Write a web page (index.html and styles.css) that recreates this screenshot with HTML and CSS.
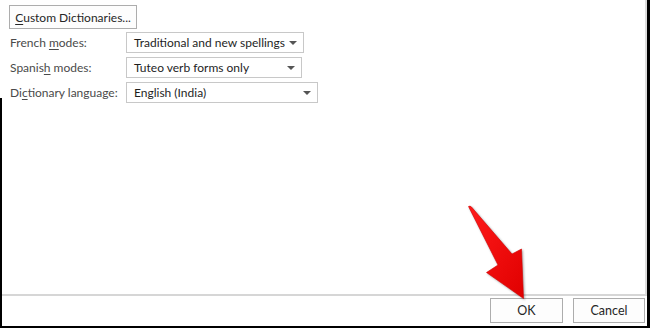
FILE: index.html
```html
<!DOCTYPE html>
<html lang="en">
<head>
<meta charset="utf-8">
<title>Custom Dictionaries</title>
<link rel="stylesheet" href="styles.css">
</head>
<body>
<div class="window">
  <div class="panel">
    <div class="form">
      <button class="btn btn-custom" type="button"><u>C</u>ustom Dictionaries...</button>
      <div class="rows">
        <div class="row">
          <span class="label">French <u>m</u>odes:</span>
          <div class="select select-fr"><span>Traditional and new spellings</span><i class="caret"></i></div>
        </div>
        <div class="row">
          <span class="label">Spanis<u>h</u> modes:</span>
          <div class="select select-es"><span>Tuteo verb forms only</span><i class="caret"></i></div>
        </div>
        <div class="row">
          <span class="label">Di<u>c</u>tionary language:</span>
          <div class="select select-lang"><span>English (India)</span><i class="caret"></i></div>
        </div>
      </div>
    </div>
  </div>
  <div class="footer">
    <button class="btn btn-foot" type="button">OK</button>
    <button class="btn btn-foot btn-cancel" type="button">Cancel</button>
  </div>
  <svg class="arrow" width="70" height="110" viewBox="460 200 70 110" aria-hidden="true">
    <defs>
      <linearGradient id="rg" x1="0" y1="0" x2="1" y2="1">
        <stop offset="0" stop-color="#ff1a1a"/>
        <stop offset="1" stop-color="#e00000"/>
      </linearGradient>
    </defs>
    <path d="M468.5,206.5 Q470,205.5 471.5,207 L512,254 L521.5,249 L523.5,298.5 L486.5,272.5 L498,265 Z" fill="url(#rg)" stroke="#d40000" stroke-width="0.6" stroke-linejoin="round"/>
  </svg>
</div>
</body>
</html>
```

FILE: styles.css
```css
* {
  box-sizing: border-box;
}

html, body {
  margin: 0;
  padding: 0;
  background: #fff;
}

body {
  font-family: Lato, "Open Sans", "Liberation Sans", sans-serif;
  font-size: 12px;
  color: #262626;
}

.window {
  position: relative;
  width: 650px;
  height: 328px;
  display: flex;
  flex-direction: column;
  border-right: 3px solid #000;
  border-bottom: 2px solid #000;
  background: #fff;
}

.window::before {
  content: "";
  position: absolute;
  left: 0;
  top: 98px;
  bottom: 0;
  width: 2px;
  background: #000;
}

.panel {
  height: 296px;
  border-right: 2px solid #dcdcdc;
  border-bottom: 2px solid #d6d6d6;
}

.form {
  padding: 5px 0 0 9px;
}

.btn {
  font-family: inherit;
  font-size: 12px;
  color: #262626;
  background: #fdfdfd;
  border: 1px solid #adadad;
  border-radius: 0;
  padding: 0;
  margin: 0;
  display: flex;
  align-items: center;
  justify-content: center;
}

.btn u {
  text-decoration-thickness: 1px;
  text-underline-offset: 2px;
}

.btn-custom {
  width: 128px;
  height: 24px;
}

.rows {
  margin-top: 3px;
  display: flex;
  flex-direction: column;
  gap: 4px;
}

.row {
  display: flex;
  align-items: center;
  height: 21px;
}

.label {
  width: 117px;
  padding-left: 1px;
  color: #4a4a4a;
  white-space: nowrap;
}

.label u {
  text-decoration-thickness: 1px;
  text-underline-offset: 2px;
}

.select {
  height: 21px;
  border: 1px solid #c8c8c8;
  display: flex;
  align-items: center;
  justify-content: space-between;
  padding: 0 6px 0 7px;
  color: #1e1e1e;
  white-space: nowrap;
}

.select-fr { width: 178px; }
.select-es { width: 176px; }
.select-lang { width: 192px; }

.caret {
  width: 0;
  height: 0;
  border-left: 4px solid transparent;
  border-right: 4px solid transparent;
  border-top: 4px solid #555;
}

.footer {
  flex: 1;
  display: flex;
  justify-content: flex-end;
  align-items: flex-start;
  gap: 10px;
  padding: 2px 2px 0 0;
}

.btn-foot {
  width: 73px;
  height: 25px;
  font-size: 12.5px;
}

.btn-cancel {
  width: 72px;
}

.arrow {
  position: absolute;
  left: 460px;
  top: 200px;
  filter: drop-shadow(1px 1px 1px rgba(0, 0, 0, 0.35));
}
```
